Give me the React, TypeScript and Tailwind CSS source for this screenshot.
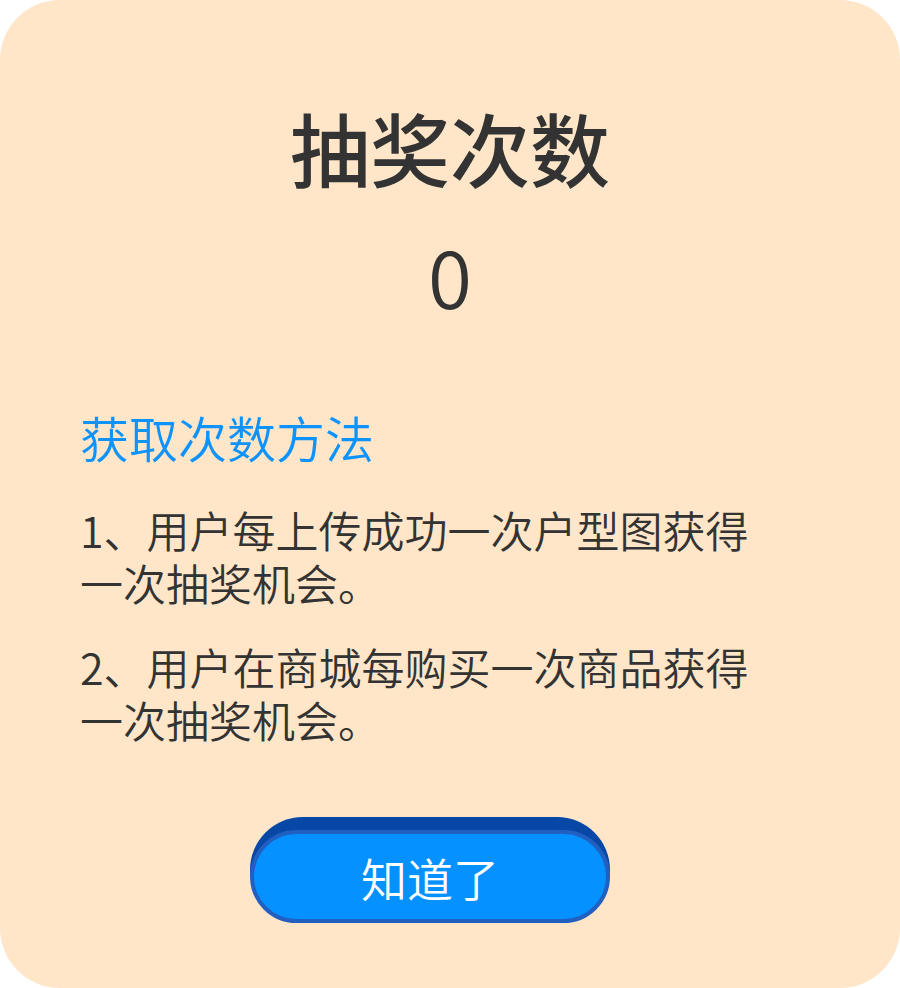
export default function App() {
  return (
    <div
      className="w-[900px] h-[988px] bg-[#ffe6c8] rounded-[60px] flex flex-col items-center text-[#333333]"
      style={{ fontFamily: '"Noto Sans CJK SC", "Noto Sans", sans-serif' }}
    >
      <div className="mt-[102px] text-[80px] leading-[88px] font-medium">抽奖次数</div>
      <div className="mt-[40px] text-[80px] leading-[88px] font-[350]">0</div>
      <div className="self-stretch pl-[80px] pr-[120px] mt-[88px] flex flex-col">
        <div className="text-[49px] leading-[62px] text-[#0e93fc] font-[350]">获取次数方法</div>
        <p className="mt-[35px] max-w-[690px] text-[43px] leading-[53px] font-[350]">1、用户每上传成功一次户型图获得一次抽奖机会。</p>
        <p className="mt-[31px] max-w-[690px] text-[43px] leading-[53px] font-[350]">2、用户在商城每购买一次商品获得一次抽奖机会。</p>
        <div className="mt-[71px] self-center w-[360px] h-[106px] rounded-full bg-[#0747a6] flex flex-col justify-end">
          <div className="h-[93px] rounded-full border-[4px] border-[#2160c0] bg-[#0591ff] flex items-center justify-center text-white text-[46px] leading-none font-[350]">
            知道了
          </div>
        </div>
      </div>
    </div>
  );
}
